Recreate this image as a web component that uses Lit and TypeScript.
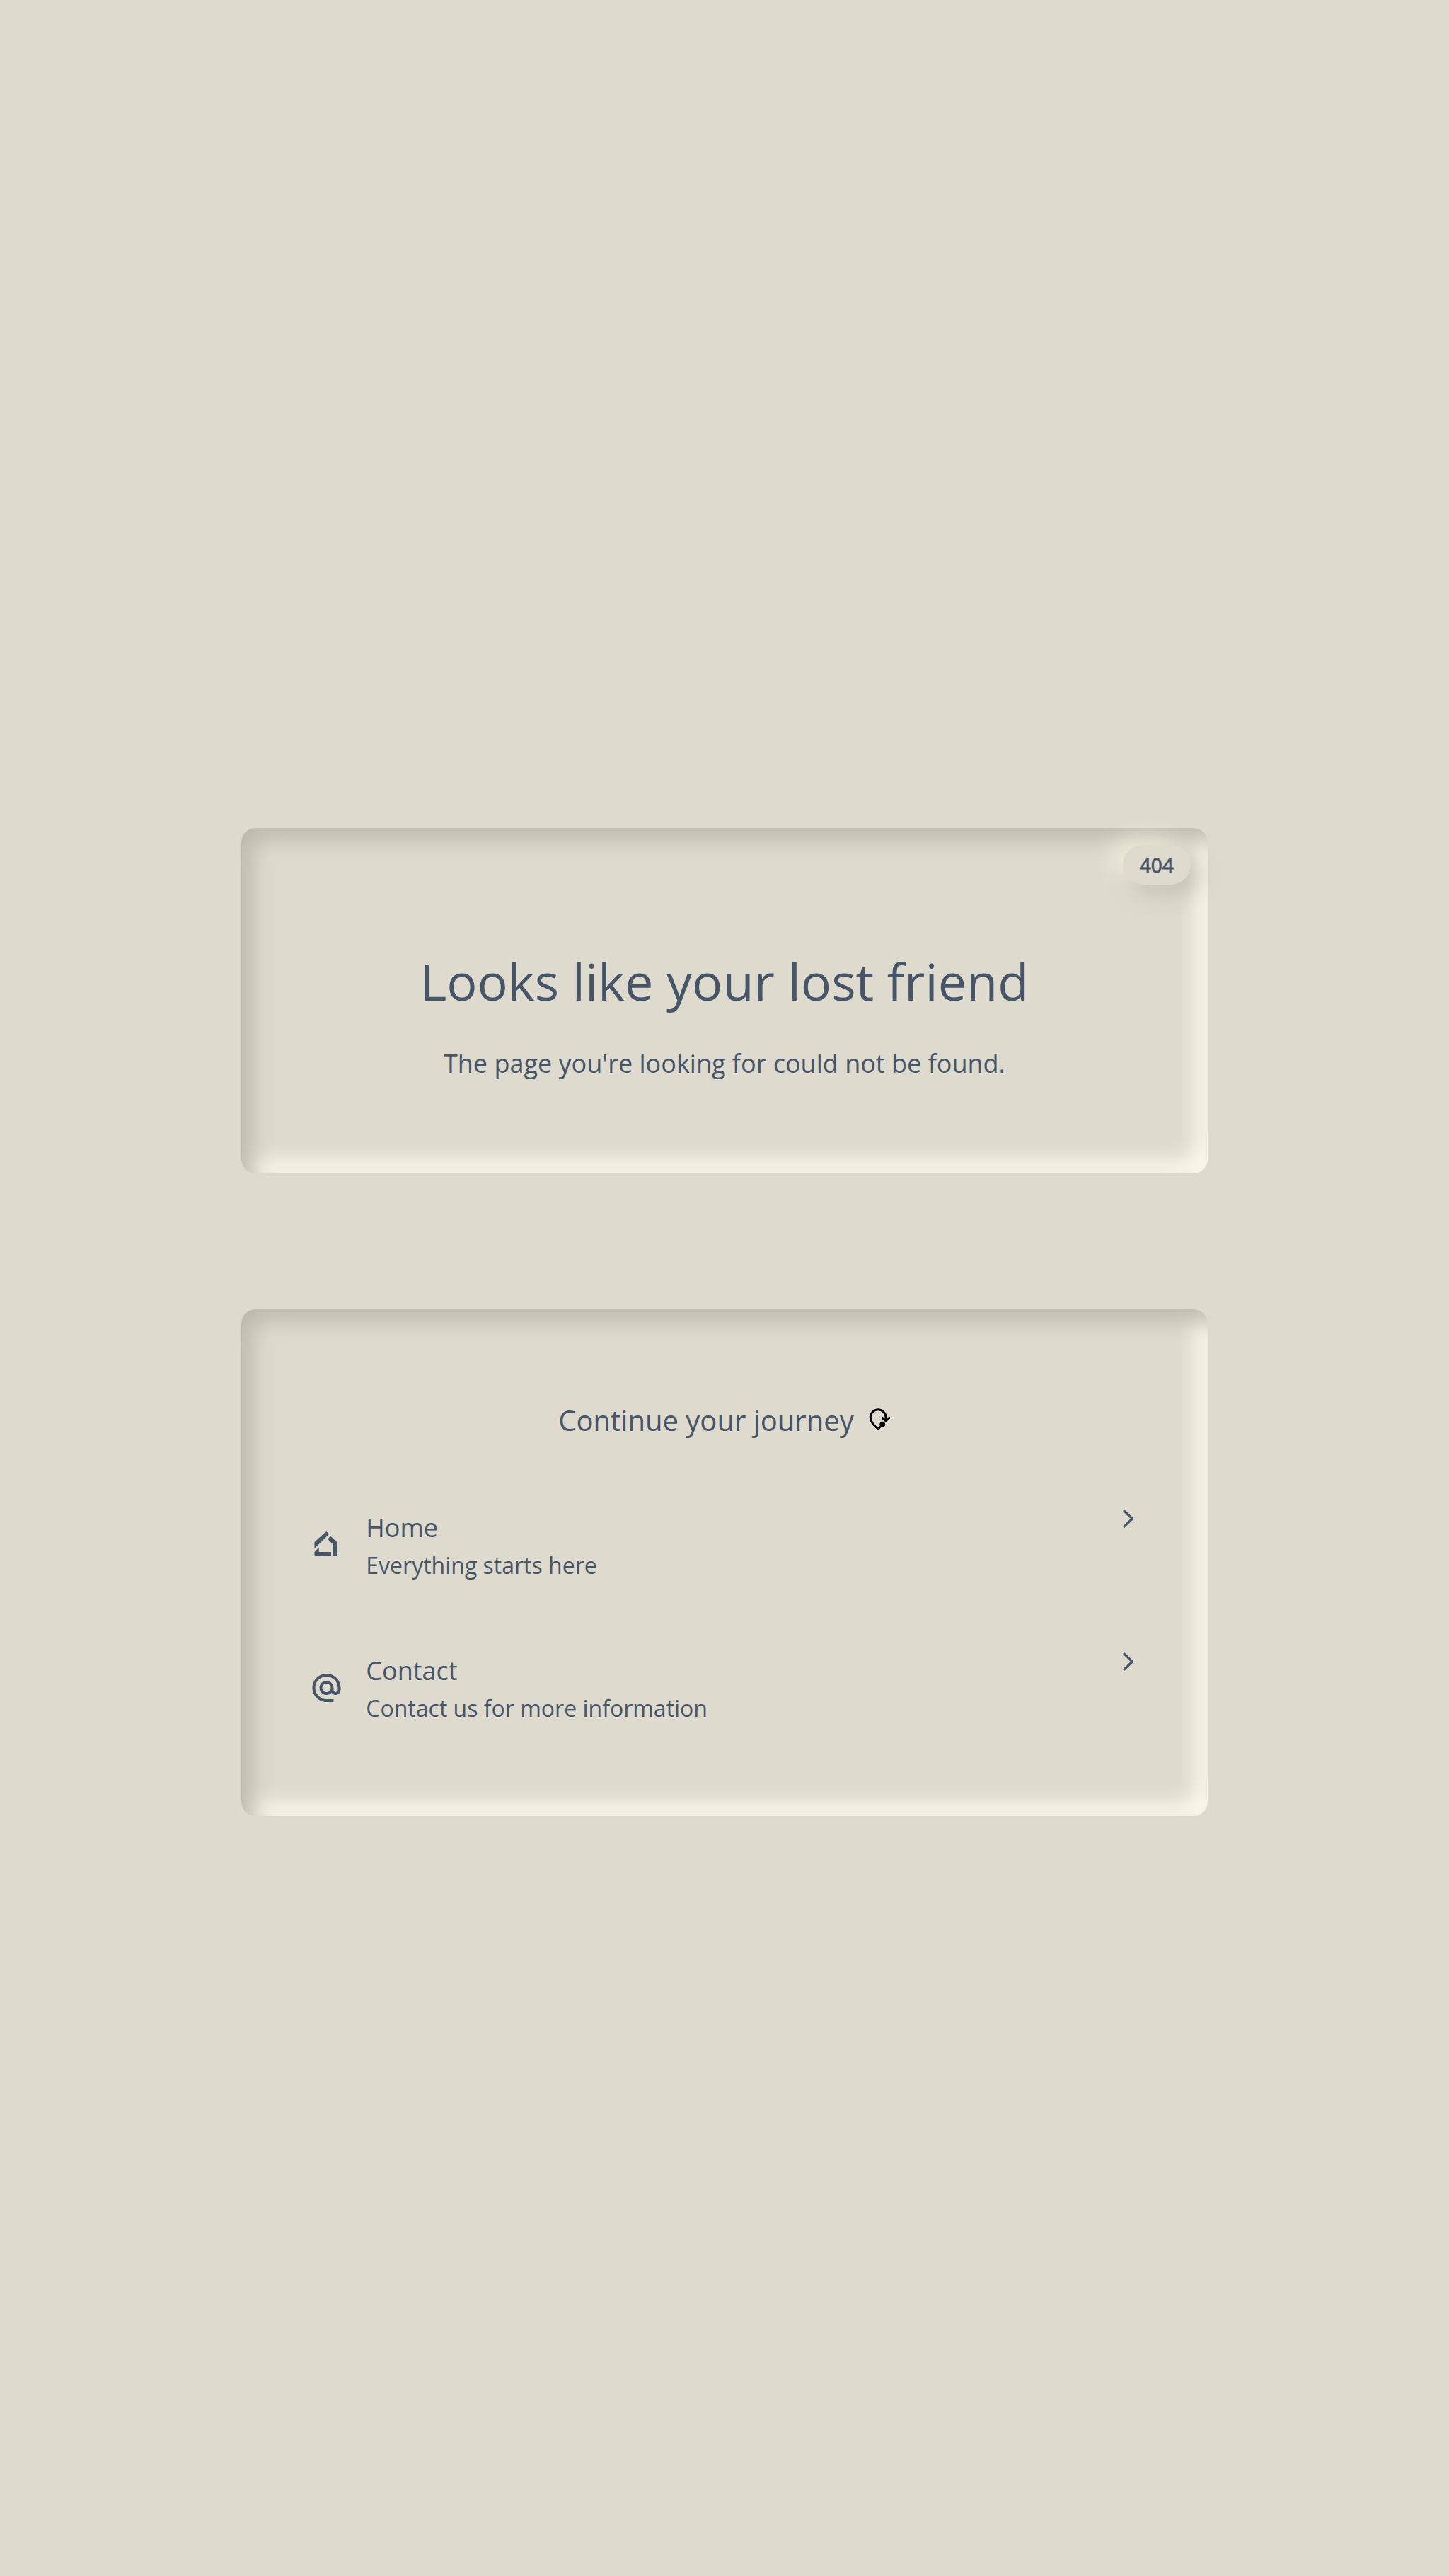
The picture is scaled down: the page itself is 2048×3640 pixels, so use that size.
import { LitElement, html, css, svg } from "lit";
import { customElement } from "lit/decorators.js";

const homeIcon = svg`
  <path d="M7.5 29.3V21Q7.5 20 8.3 19.3L23 6Q24.3 4.9 25.5 6L28 8.7Z"/>
  <path d="M30 11.4L39.3 20Q40 20.7 40 21.6V38.2Q40 40 38.2 40H33.8V23.6L26.2 15.9Z"/>
  <path d="M13.8 27.6V34H31V40H9.5Q7.5 40 7.5 38V34Z"/>`;

const atIcon = svg`
  <path transform="translate(.5 0) scale(2)" d="M12 2C6.48 2 2 6.48 2 12s4.48 10 10 10h5v-2h-5c-4.34 0-8-3.66-8-8s3.66-8 8-8 8 3.66 8 8v1.43c0 .79-.71 1.57-1.5 1.57s-1.5-.78-1.5-1.57V12c0-2.76-2.24-5-5-5s-5 2.24-5 5 2.24 5 5 5c1.38 0 2.64-.56 3.54-1.47.65.89 1.77 1.47 2.96 1.47 1.97 0 3.5-1.6 3.5-3.57V12c0-5.52-4.48-10-10-10zm0 13c-1.66 0-3-1.34-3-3s1.34-3 3-3 3 1.34 3 3-1.34 3-3 3z"/>`;

const links = [
  { icon: homeIcon, title: "Home", text: "Everything starts here" },
  { icon: atIcon, title: "Contact", text: "Contact us for more information" },
];

@customElement("app-root")
export class AppRoot extends LitElement {
  static styles = css`
    :host {
      display: block;
      font-family: "Open Sans", sans-serif;
      color: #475569;
    }
    * { box-sizing: border-box; margin: 0; }
    .page {
      min-height: 3640px;
      padding-top: 96px;
      background: #dedace;
      display: flex;
      flex-direction: column;
      align-items: center;
      justify-content: center;
      gap: 192px;
    }
    .card {
      width: 66.6667%;
      border-radius: 20px;
      position: relative;
      box-shadow: inset 16px 16px 30px #bdbbae, inset -16px -16px 30px #fffdee;
    }
    .hero {
      height: 488px;
      padding-top: 44px;
      display: flex;
      flex-direction: column;
      align-items: center;
      justify-content: center;
      gap: 44px;
    }
    .badge {
      position: absolute;
      top: 24px;
      right: 24px;
      padding: 8px 24px;
      border-radius: 28px;
      background: #dedace;
      font-size: 28px;
      line-height: 40px;
      -webkit-text-stroke: 0.8px currentColor;
      box-shadow: 12px 14px 30px rgba(189, 187, 174, 0.75), -14px -10px 32px rgba(252, 250, 228, 0.65);
    }
    h1 { font-size: 72px; line-height: 90px; font-weight: 400; }
    .lead { font-size: 36px; line-height: 56px; }
    .journey { height: 716px; padding: 129px 92px 0 96px; }
    .heading {
      display: flex;
      justify-content: center;
      align-items: center;
      gap: 16px;
      height: 56px;
    }
    h2 { font-size: 40px; line-height: 56px; font-weight: 400; }
    .pin { width: 40px; height: 40px; display: block; }
    .list { list-style: none; padding: 0; margin-top: 71px; }
    .row {
      height: 202px;
      display: flex;
      align-items: flex-start;
    }
    .icon { width: 48px; height: 48px; fill: currentColor; margin-top: 53px; }
    .body { flex: 1; margin: 25px 0 0 32px; }
    .title { font-size: 36px; line-height: 56px; }
    .text { font-size: 32px; line-height: 50px; }
    .chevron { width: 44px; height: 48px; margin-top: 16px; display: block; }
  `;

  render() {
    return html`
      <main class="page">
        <section class="card hero">
          <span class="badge">404</span>
          <h1>Looks like your lost friend</h1>
          <p class="lead">The page you're looking for could not be found.</p>
        </section>
        <section class="card journey">
          <div class="heading">
            <h2>Continue your journey</h2>
            <svg class="pin" viewBox="0 0 40 40" fill="none" stroke="#000" stroke-width="3" stroke-linecap="round" stroke-linejoin="round">
              <path d="M29 18V15.7A10.9 10.9 0 0 0 7.2 15.7C7.2 22 12.2 27.4 18.1 32.2L21.5 28.8"/>
              <path d="M24 16.4L29 20.8L34 16.4"/>
              <circle cx="24.2" cy="25.6" r="3.9" fill="#000" stroke="none"/>
            </svg>
          </div>
          <ul class="list">
            ${links.map(
              (l) => html`<li class="row">
                <svg class="icon" viewBox="0 0 48 48">${l.icon}</svg>
                <div class="body">
                  <p class="title">${l.title}</p>
                  <p class="text">${l.text}</p>
                </div>
                <svg class="chevron" viewBox="0 0 44 48" fill="none" stroke="currentColor" stroke-width="3.2" stroke-linecap="round" stroke-linejoin="round">
                  <path d="M18 13L29.3 24L18 35"/>
                </svg>
              </li>`
            )}
          </ul>
        </section>
      </main>
    `;
  }
}
